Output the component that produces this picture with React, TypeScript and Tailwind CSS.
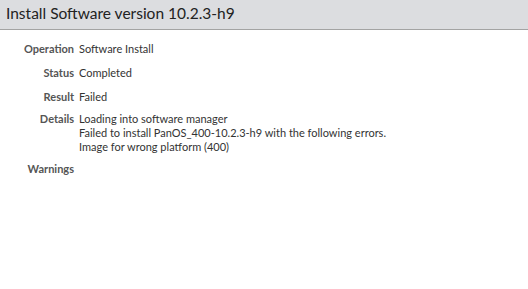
export default function App() {
  const rows: { label: string; lines: string[]; gap: string }[] = [
    { label: 'Operation', lines: ['Software Install'], gap: 'mt-0' },
    { label: 'Status', lines: ['Completed'], gap: 'mt-[10px]' },
    { label: 'Result', lines: ['Failed'], gap: 'mt-[10px]' },
    {
      label: 'Details',
      lines: [
        'Loading into software manager',
        'Failed to install PanOS_400-10.2.3-h9 with the following errors.',
        'Image for wrong platform (400)',
      ],
      gap: 'mt-[8px]',
    },
    { label: 'Warnings', lines: [], gap: 'mt-[8px]' },
  ]

  return (
    <div className="h-[289px] w-[528px] bg-white font-['Lato',sans-serif]">
      <div className="h-[30px] border-b border-[#a3a3a3] bg-[#dcdde0] px-[6px] pt-[3px] text-[15.5px] leading-[20px] text-[#222]">
        Install Software version 10.2.3-h9
      </div>
      <div className="flex flex-col pt-[12px] text-[11px] leading-[14px]">
        {rows.map((r) => (
          <div key={r.label} className={`flex gap-[5px] ${r.gap}`}>
            <div className="w-[74px] shrink-0 text-right font-bold text-[#555]">{r.label}</div>
            <div className="text-[#333]">
              {r.lines.map((l) => (
                <div key={l}>{l}</div>
              ))}
            </div>
          </div>
        ))}
      </div>
    </div>
  )
}
